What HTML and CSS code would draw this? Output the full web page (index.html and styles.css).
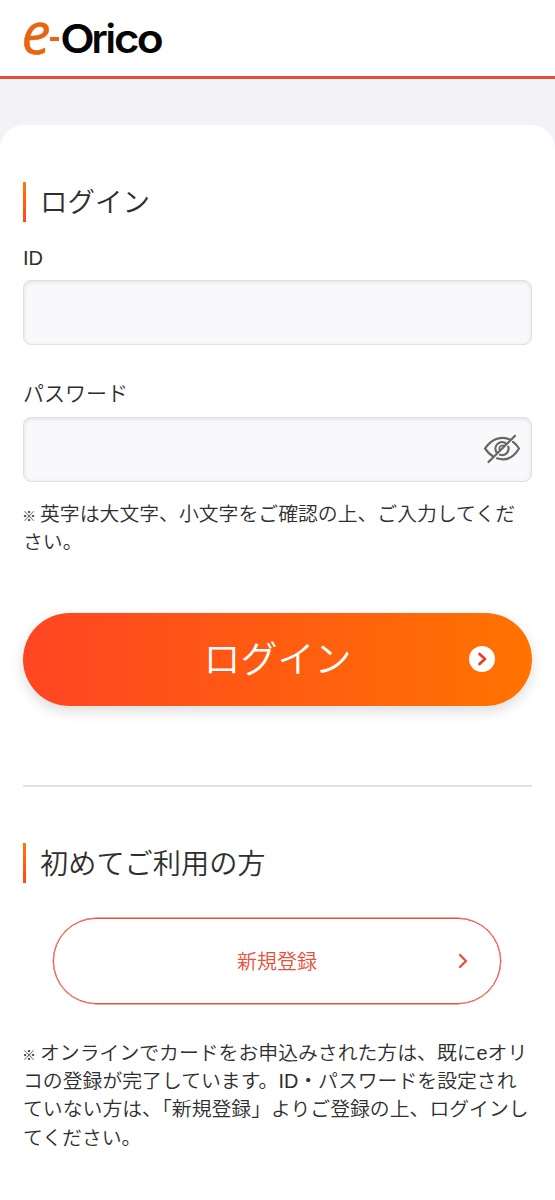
FILE: index.html
```html
<!DOCTYPE html>
<html lang="ja">
<head>
<meta charset="utf-8">
<title>e-Orico</title>
<link rel="stylesheet" href="styles.css">
</head>
<body>
<header class="header">
  <svg class="logo" width="142" height="56" viewBox="0 0 142 56" role="img" aria-label="e-Orico">
    <text class="logo-e" x="-.5" y="43.500" textLength="29" lengthAdjust="spacingAndGlyphs">e</text>
    <rect x="28" y="27" width="9" height="4" fill="#e8650f"/>
    <text class="logo-name" y="43"><tspan x="38.300" textLength="34.500" lengthAdjust="spacingAndGlyphs">O</tspan><tspan x="69.500">r</tspan><tspan x="83.500">i</tspan><tspan x="92" textLength="25.500" lengthAdjust="spacingAndGlyphs">c</tspan><tspan x="114.700" textLength="27" lengthAdjust="spacingAndGlyphs">o</tspan></text>
  </svg>
</header>
<main class="card">
  <h1 class="heading heading-login">ログイン</h1>
  <label class="label" for="uid">ID</label>
  <div class="field"><input class="input" id="uid" type="text"></div>
  <label class="label label-password" for="pw">パスワード</label>
  <div class="field">
    <input class="input" id="pw" type="password">
    <svg class="eye" width="38" height="30" viewBox="0 0 38 30">
      <path d="M26.200 5.200C15.500 1 7 7 2 14.500Q5.500 19.500 9.500 22M14 24.300C24 27.500 31.500 22 36 14.500Q33.500 10.500 30 7.900"/>
      <path d="M23.300 9.800A6.500 6.500 0 0 0 13.600 18.300M17 20.800A6.500 6.500 0 0 0 25.300 12.900M5.500 28L32 1.800"/>
      <path class="eye-iris" d="M20.500 11.600A3.300 3.300 0 0 0 16.400 15.600"/>
    </svg>
  </div>
  <p class="note"><span class="mark">※</span>英字は大文字、小文字をご確認の上、ご入力してくだ<br>さい。</p>
  <button class="login">ログイン
    <svg class="login-icon" width="26" height="26" viewBox="0 0 26 26"><circle cx="13" cy="13" r="13" fill="#fff"/><path d="M10.500 8L16 13L10.500 18" fill="none" stroke="#e0402c" stroke-width="2.700" stroke-linecap="round" stroke-linejoin="round"/></svg>
  </button>
  <hr class="divider">
  <h2 class="heading heading-new">初めてご利用の方</h2>
  <a class="register">新規登録
    <svg class="register-icon" width="10" height="16" viewBox="0 0 10 16"><path d="M2 2L8 8L2 14" fill="none" stroke="#e9503b" stroke-width="2.300" stroke-linecap="round" stroke-linejoin="round"/></svg>
  </a>
  <p class="note note-register"><span class="mark">※</span>オンラインでカードをお申込みされた方は、既にeオリ<br>コの登録が完了しています。ID・パスワードを設定され<br>ていない方は、「新規登録」よりご登録の上、ログインし<br>てください。</p>
</main>
</body>
</html>
```
FILE: styles.css
```css
* { box-sizing: border-box; }
body {
  margin: 0;
  background: #f2f2f7;
  color: #2e2e2e;
  font-family: "Liberation Sans", "Noto Sans CJK JP", sans-serif;
  font-weight: 350;
}
.header {
  height: 79px;
  padding: 10px 0 0 22px;
  background: #fff;
  border-bottom: 3px solid #e5503a;
}
.logo { display: block; overflow: visible; }
.logo-e { font: italic 500 59px "Open Sans", sans-serif; fill: #e8650f; stroke: #e8650f; stroke-width: .6px; }
.logo-name { font: 600 40px Inter, sans-serif; fill: #050505; }
.card {
  margin-top: 46px;
  min-height: 1075px;
  padding: 57px 23px 0;
  background: #fff;
  border-radius: 24px 24px 0 0;
}
.heading {
  display: flex;
  gap: 14px;
  height: 40px;
  margin: 0;
  font-size: 28.200px;
  line-height: 42px;
  font-weight: 350;
  white-space: nowrap;
}
.heading-login { font-size: 27.500px; }
.heading::before {
  content: "";
  width: 3px;
  height: 40px;
  background: linear-gradient(#ff7a00, #ff4522);
}
.label {
  display: block;
  height: 28px;
  margin-top: 22px;
  margin-bottom: 8px;
  font-size: 20px;
  line-height: 28px;
}
.label-password { margin-top: 35px; margin-bottom: 9px; font-size: 21px; }
.field { position: relative; width: 509px; height: 65px; }
.input {
  display: block;
  width: 100%;
  height: 100%;
  padding: 0 16px;
  border: 1.500px solid #dfdfe1;
  border-radius: 8px;
  background: #f9f9fb;
  box-shadow: inset 0 1px 4px rgba(0, 0, 0, .1);
  outline: none;
}
.eye {
  position: absolute;
  right: 11px;
  top: 17px;
  fill: none;
  stroke: #666;
  stroke-width: 2.200;
  stroke-linecap: round;
  stroke-linejoin: round;
}
.eye-iris { stroke-width: 1.600; }
.note {
  margin: 18px 0 0;
  font-size: 19.850px;
  line-height: 28px;
  white-space: nowrap;
}
.mark {
  display: inline-block;
  width: 17px;
  margin-left: -1px;
  margin-right: 1px;
  font-size: 14px;
  font-weight: 500;
  line-height: 1;
}
.login {
  position: relative;
  display: block;
  width: 509px;
  height: 93px;
  margin: 57px 0 0;
  padding: 0 0 5px;
  border: 0;
  border-radius: 47px;
  background: linear-gradient(90deg, #ff4522, #ff7300);
  box-shadow: 0 5px 14px rgba(0, 0, 0, .14);
  color: #fff;
  font: 350 37px/86px "Noto Sans CJK JP", sans-serif;
}
.login-icon { position: absolute; right: 37px; top: 33px; }
.divider { height: 2px; margin: 79px 0 0; border: 0; background: #e2e2e2; }
.heading-new { margin-top: 56px; }
.register {
  position: relative;
  display: block;
  width: 448px;
  height: 86px;
  margin: 35px 0 0 30px;
  border: 1.500px solid #e9503b;
  border-radius: 43px;
  box-shadow: 0 0 0 .4px #e9503b;
  color: #e9503b;
  font-size: 20px;
  line-height: 86px;
  text-align: center;
}
.register-icon { position: absolute; right: 32px; top: 34px; }
.note-register { margin-top: 35px; line-height: 28.200px; }
```
